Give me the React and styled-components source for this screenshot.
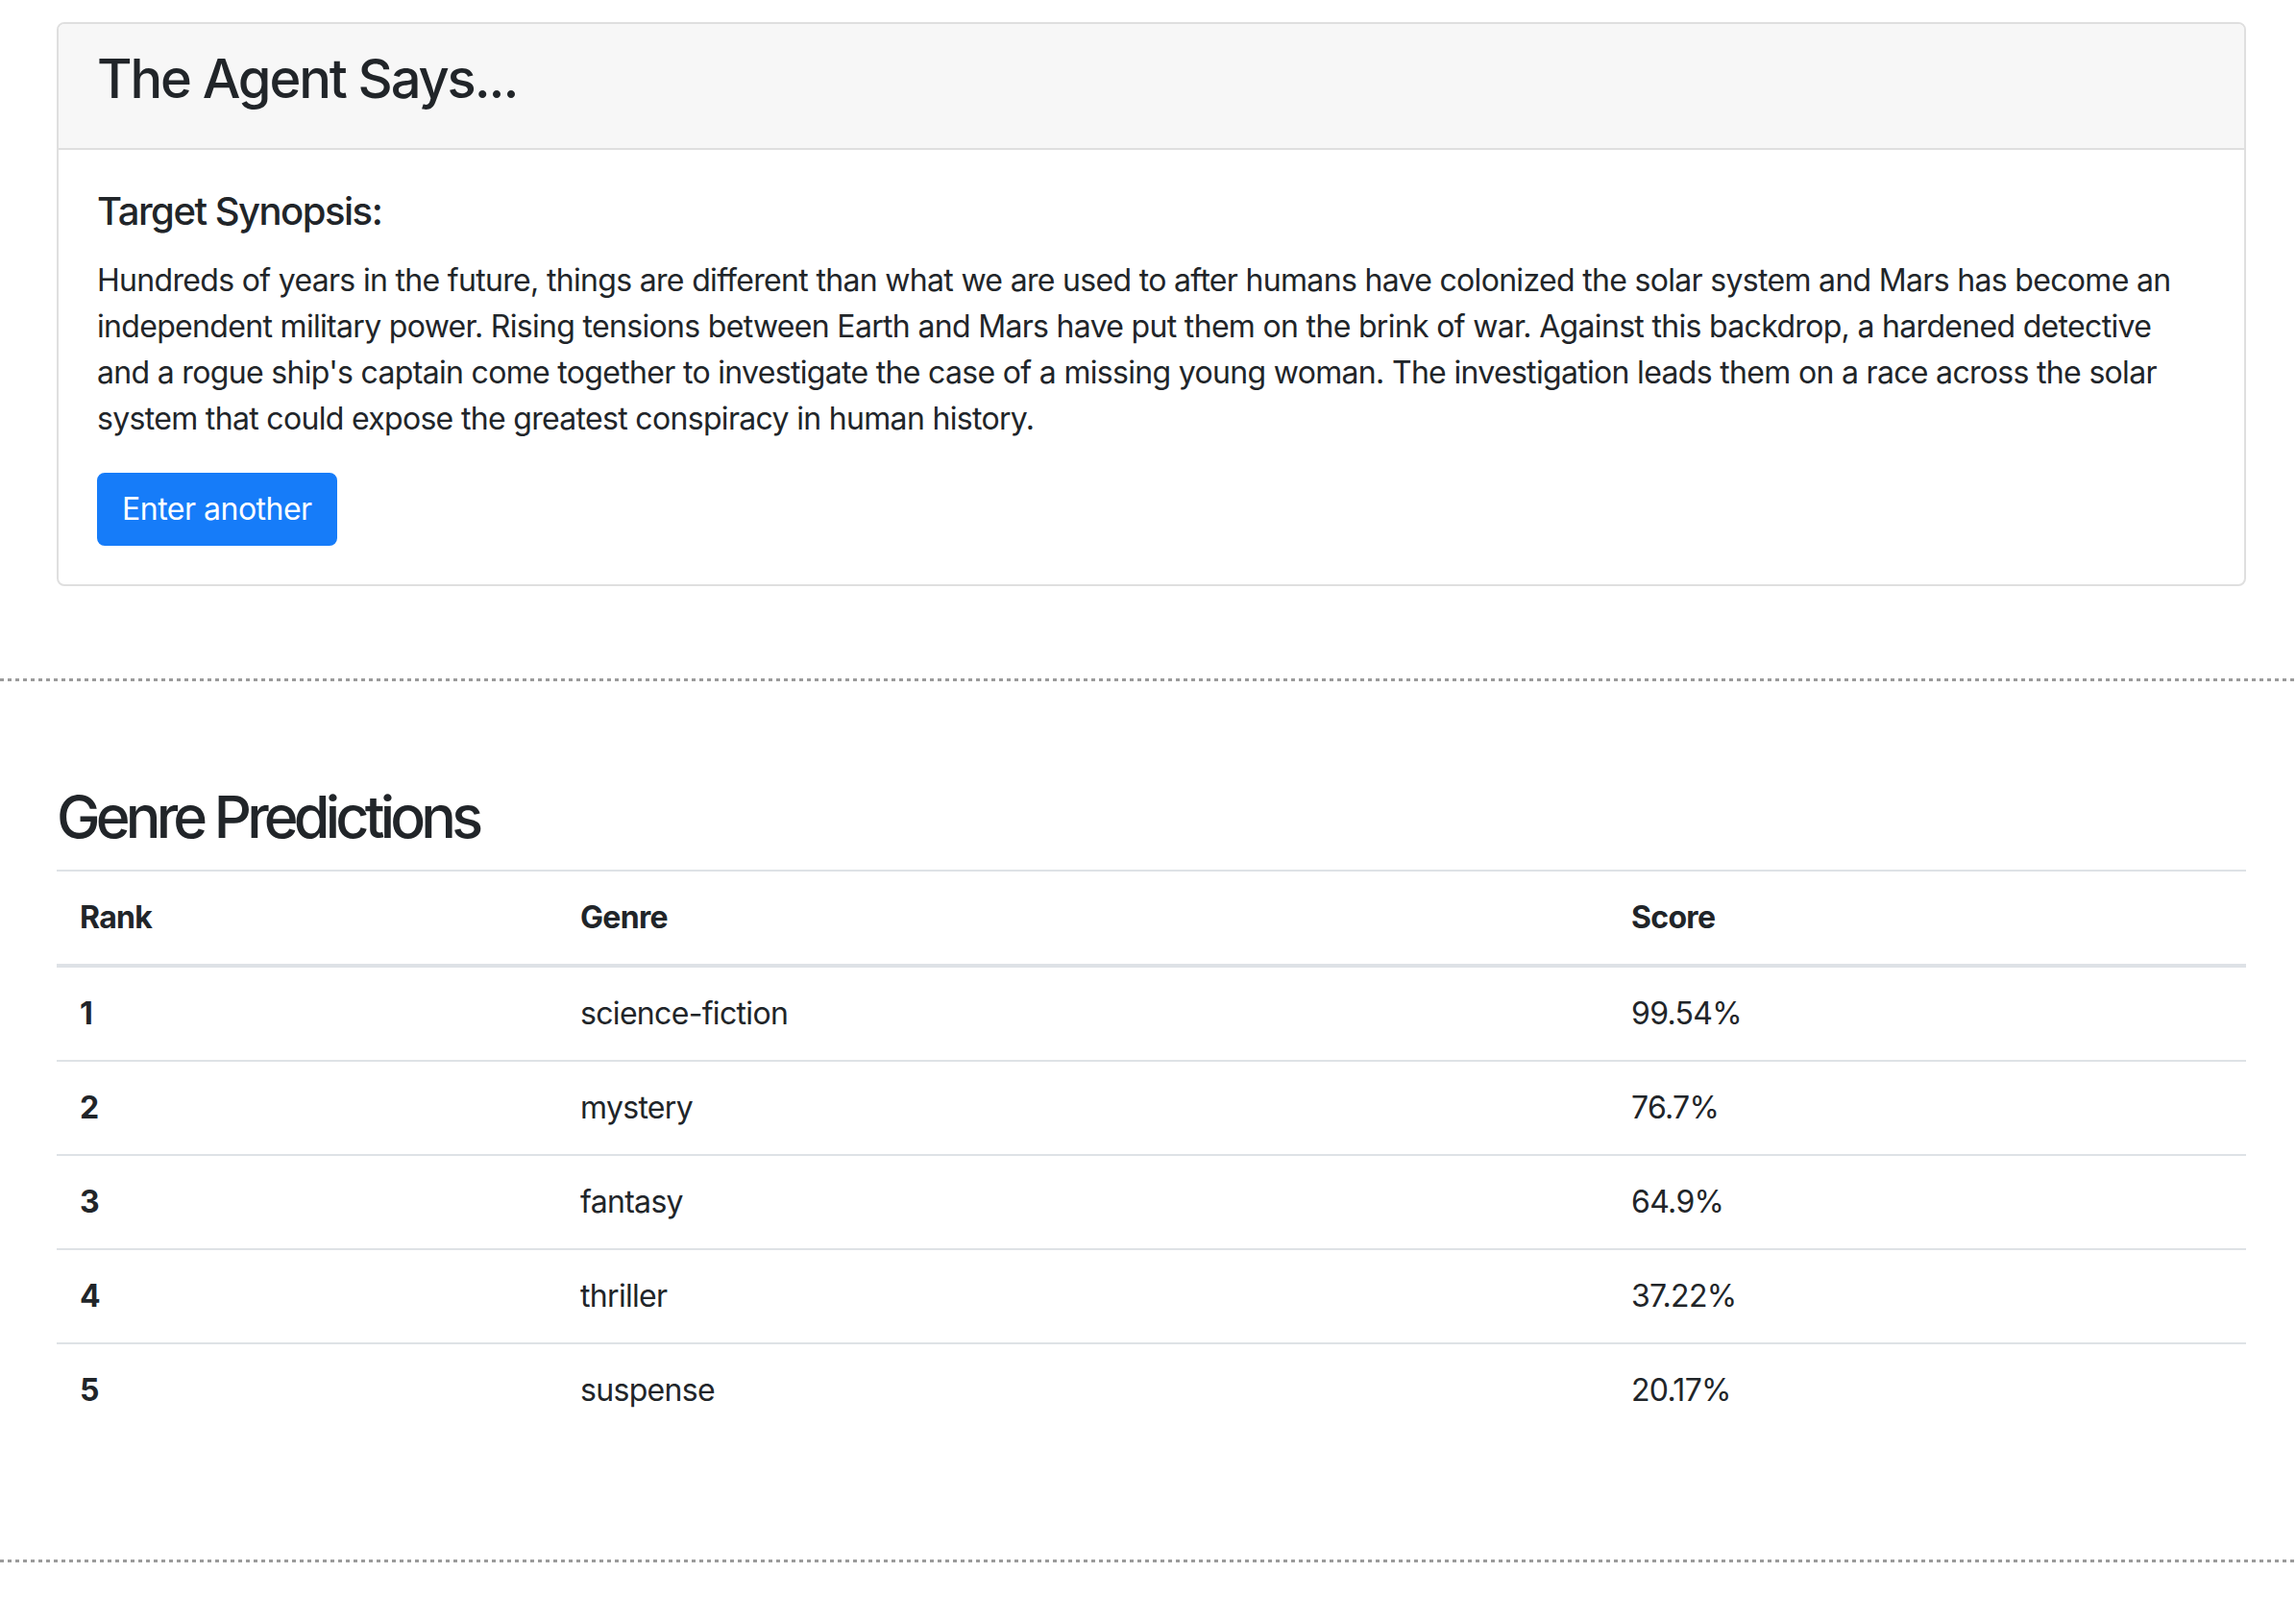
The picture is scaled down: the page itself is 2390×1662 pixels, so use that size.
import React from 'react';
import styled, { createGlobalStyle } from 'styled-components';

const GlobalStyle = createGlobalStyle`
  html, body {
    margin: 0;
    padding: 0;
    background: #fff;
  }
  body {
    font-family: Inter, "Noto Sans", "Liberation Sans", sans-serif;
    font-size: 32px;
    line-height: 48px;
    letter-spacing: -0.68px;
    color: #212529;
  }
`;

const Page = styled.div`
  padding-top: 23px;
`;

const Container = styled.div`
  width: 2279px;
  margin-left: 59px;
`;

const Section = styled.section`
  padding-bottom: ${(p) => p.$bottom || 96}px;
  padding-top: ${(p) => p.$top || 0}px;
`;

const Divider = styled.hr`
  margin: 0;
  border: 0;
  height: 3px;
  background: repeating-linear-gradient(to right, #9b9b9b 0 4px, transparent 4px 8px);
`;

const Card = styled.div`
  border: 2px solid #dfdfdf;
  border-radius: 8px;
  overflow: hidden;
`;

const CardHeader = styled.div`
  background: #f7f7f7;
  padding: 24px 40px;
  border-bottom: 2px solid #dfdfdf;
`;

const CardTitle = styled.h3`
  margin: 0 0 14px;
  font-size: 56px;
  line-height: 67px;
  font-weight: 500;
  letter-spacing: -2.1px;
`;

const CardBody = styled.div`
  padding: 40px;
`;

const SubTitle = styled.h5`
  margin: 0 0 24px;
  font-size: 40px;
  line-height: 48px;
  font-weight: 500;
  letter-spacing: -1.5px;
`;

const Synopsis = styled.p`
  margin: 0 0 32px;
`;

const Button = styled.button`
  font: inherit;
  letter-spacing: -0.5px;
  color: #fff;
  background: #167cf9;
  border: 2px solid #167cf9;
  border-radius: 8px;
  padding: 12px 24px;
  line-height: 48px;
  cursor: pointer;
`;

const Heading = styled.h2`
  margin: 0 0 16px;
  font-size: 61px;
  line-height: 77px;
  font-weight: 500;
  letter-spacing: -4.8px;
`;

const Table = styled.table`
  width: 100%;
  border-collapse: collapse;
  margin-bottom: 32px;
`;

const Th = styled.th`
  box-sizing: border-box;
  text-align: left;
  font-weight: 700;
  padding: 24px;
  border-top: 2px solid #dee2e6;
  border-bottom: ${(p) => (p.$head ? '4px solid #dee2e6' : '0')};
  width: ${(p) => p.$w || 'auto'};
`;

const Td = styled.td`
  padding: 24px;
  border-top: 2px solid #dee2e6;
`;

const predictions = [
  ['science-fiction', '99.54%'],
  ['mystery', '76.7%'],
  ['fantasy', '64.9%'],
  ['thriller', '37.22%'],
  ['suspense', '20.17%'],
];

export default function App() {
  return (
    <Page>
      <GlobalStyle />
      <Container>
        <Section>
          <Card>
            <CardHeader>
              <CardTitle>The Agent Says...</CardTitle>
            </CardHeader>
            <CardBody>
              <SubTitle>Target Synopsis:</SubTitle>
              <Synopsis>
                Hundreds of years in the future, things are different than what we are used to after humans have
                colonized the solar system and Mars has become an
                <br />
                independent military power. Rising tensions between Earth and Mars have put them on the brink of war.
                Against this backdrop, a hardened detective
                <br />
                and a rogue ship's captain come together to investigate the case of a missing young woman. The
                investigation leads them on a race across the solar
                <br />
                system that could expose the greatest conspiracy in human history.
              </Synopsis>
              <Button>Enter another</Button>
            </CardBody>
          </Card>
        </Section>
      </Container>
      <Divider />
      <Container>
        <Section $top={103}>
          <Heading>Genre Predictions</Heading>
          <Table>
            <thead>
              <tr>
                <Th $head $w="521px">Rank</Th>
                <Th $head $w="1094px">Genre</Th>
                <Th $head>Score</Th>
              </tr>
            </thead>
            <tbody>
              {predictions.map(([genre, score], i) => (
                <tr key={genre}>
                  <Th>{i + 1}</Th>
                  <Td>{genre}</Td>
                  <Td>{score}</Td>
                </tr>
              ))}
            </tbody>
          </Table>
        </Section>
      </Container>
      <Divider />
    </Page>
  );
}
